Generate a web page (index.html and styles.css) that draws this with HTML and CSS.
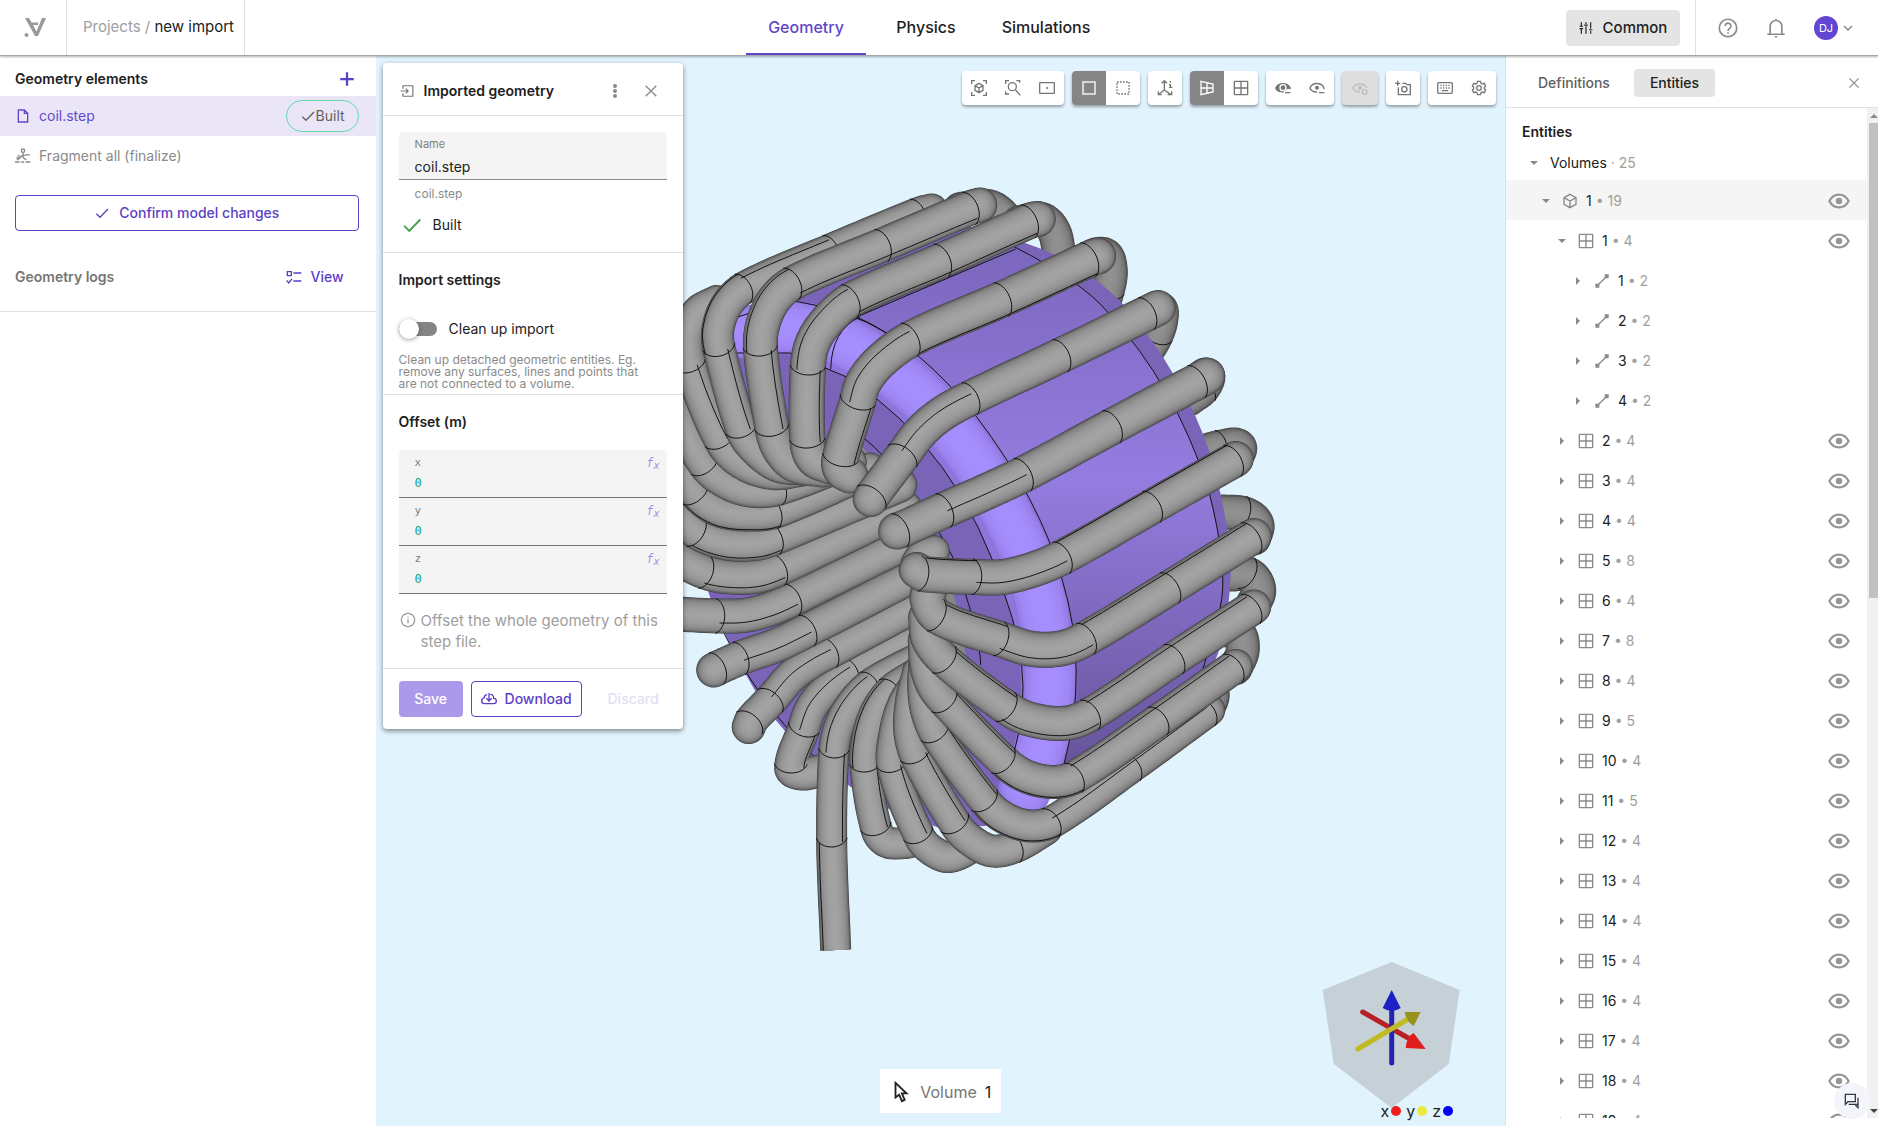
FILE: index.html
```
<!DOCTYPE html>
<html lang="en">
<head>
    <meta charset="UTF-8">
    <meta name="viewport" content="width=device-width, initial-scale=1.0">
    <title>new import</title>
    <link rel="stylesheet" href="styles.css">
</head>
<body>
    <svg class="sprite" aria-hidden="true">
        <symbol id="i-plus" viewBox="0 0 24 24"><path d="M12 3v18M3 12h18"/></symbol>
        <symbol id="i-file" viewBox="0 0 24 24"><path d="M5 3h9l5 5v13H5zM14 3v5h5"/></symbol>
        <symbol id="i-check" viewBox="0 0 24 24"><path d="M3.500 13l5.500 5.500L21 6"/></symbol>
        <symbol id="i-x" viewBox="0 0 24 24"><path d="M4 4l16 16M20 4L4 20"/></symbol>
        <symbol id="i-down" viewBox="0 0 24 24"><path d="M4 8l8 8 8-8"/></symbol>
        <symbol id="i-fragment" viewBox="0 0 24 24"><path d="M0 21h7M9 21h5M16 21h7M2 15h5l4-4M3 18l5-3M12 7v7l5 4M13 11l9-1M4 12h3"/><circle cx="12" cy="4" r="2.500"/></symbol>
        <symbol id="i-list" viewBox="0 0 24 24"><path d="M2 4h6v6H2zM11 6h12M11 18h12M1 17l3 4 5-6"/></symbol>
        <symbol id="i-sliders" viewBox="0 0 24 24"><path d="M4 2v7M4 13v9M1 13h6M12 2v3M12 9v13M9 7h6M20 2v11M20 17v5M17 15h6M1 9h6"/></symbol>
        <symbol id="i-help" viewBox="0 0 24 24"><circle cx="12" cy="12" r="10.500"/><path d="M8.500 9.500a3.500 3.500 0 1 1 5.500 3c-1.500 1-2 1.500-2 3M12 17v2"/></symbol>
        <symbol id="i-bell" viewBox="0 0 24 24"><path d="M12 1v2M5 19v-9a7 7 0 0 1 14 0v9M1.500 19.500h21M10.500 22.500h3"/></symbol>
        <symbol id="i-import" viewBox="0 0 24 24"><path d="M5 8V3h17v18H5v-5M1 12h13M10 8l4 4-4 4"/></symbol>
        <symbol id="i-info" viewBox="0 0 24 24"><circle cx="12" cy="12" r="10"/><path d="M12 11v6M12 7v2"/></symbol>
        <symbol id="i-cloud" viewBox="0 0 24 24"><path d="M9 5c-3 1-4 3-4 5-3 1-4 3-4 5 0 3 2 4 4 4h14c3 0 4-2 4-4s-1-4-4-4c0-4-2-6-5-6M12 3v11M8 11l4 4 4-4"/></symbol>
        <symbol id="i-cube" viewBox="0 0 24 24"><path d="M12 2l9 5v10l-9 5-9-5V7zM3 7l9 5 9-5M12 12v10"/></symbol>
        <symbol id="i-grid" viewBox="0 0 24 24"><rect x="2" y="2" width="20" height="20" rx="1"/><path d="M12 2v20M2 12h20"/></symbol>
        <symbol id="i-edge" viewBox="0 0 24 24"><path class="solid" d="M2 16h6v6H2zM16 2h6v6h-6z"/><path d="M7 17L17 7"/></symbol>
        <symbol id="i-eye" viewBox="0 0 24 24"><path d="M1.500 12c2.500-5 6-7 10.500-7s8 2 10.500 7c-2.500 5-6 7-10.500 7s-8-2-10.500-7z"/><circle class="solid" cx="12" cy="12" r="3.500"/></symbol>
        <symbol id="i-eye-half" viewBox="0 0 24 24"><path d="M12 18C7 18 3 16 1.500 12 5 3 19 3 22.500 12v2M15 19h8"/><circle class="solid" cx="12" cy="11.500" r="3"/></symbol>
        <symbol id="i-eye-fill" viewBox="0 0 24 24"><path class="solid" fill-rule="evenodd" d="M0 12C4 2 20 2 24 12l-1 2c-3-1-6 0-8 2l-3 3C7 19 2 17 0 12zM12 6a5.500 5.500 0 1 0 0 11 5.500 5.500 0 0 0 0-11z"/><circle class="solid" cx="12" cy="11.500" r="3.500"/><path d="M15 19h8"/></symbol>
        <symbol id="i-eye-reset" viewBox="0 0 24 24"><path d="M12 18C7 18 3 16 1.500 12 5 4 18 4 22.500 12"/><circle class="solid" cx="12" cy="11.500" r="3"/><circle cx="19" cy="18" r="3.500"/></symbol>
        <symbol id="i-fit" viewBox="0 0 24 24"><path d="M1 6V1h5M18 1h5v5M23 18v5h-5M6 23H1v-5M12 5l6 3.500v7L12 19l-6-3.500v-7zM6 8.500l6 3.500 6-3.500M12 12v7"/></symbol>
        <symbol id="i-zoom" viewBox="0 0 24 24"><path d="M1 6V1h5M17 1h5v3M6 21H1v-4M16 15l7 8"/><circle cx="11" cy="10" r="6"/></symbol>
        <symbol id="i-center" viewBox="0 0 24 24"><rect x="1" y="4" width="22" height="16" rx="1"/><circle class="solid" cx="12" cy="12" r="1.500"/></symbol>
        <symbol id="i-square" viewBox="0 0 24 24"><rect x="3" y="3" width="18" height="18"/></symbol>
        <symbol id="i-dashed" viewBox="0 0 24 24"><rect x="3" y="3" width="18" height="18" stroke-dasharray="2.500 2"/></symbol>
        <symbol id="i-axes" viewBox="0 0 24 24"><path d="M11 15V2M7 5l4-4 4 4M11 15L2 22M11 15l10 7M2 17v5h5M16 22h6v-5M20 2v2M18 7h2v4M18 11h5"/></symbol>
        <symbol id="i-persp" viewBox="0 0 24 24"><path d="M3 2l18 4v12L3 22zM12 4v16M3 12h18"/></symbol>
        <symbol id="i-camera" viewBox="0 0 24 24"><path d="M5 11v11h18V7h-5l-2-2h-5M4 1v8M0 5h8"/><circle cx="14" cy="14" r="4"/></symbol>
        <symbol id="i-keyboard" viewBox="0 0 24 24"><rect x="1" y="4" width="22" height="16" rx="2"/><path d="M5 8h14M5 12h14" stroke-dasharray="2 2"/><path d="M7 16h10"/></symbol>
        <symbol id="i-gear" viewBox="0 0 24 24"><path d="M10 2h4l1 3 2 1 3-1 2 4-2 2v2l2 2-2 4-3-1-2 1-1 3h-4l-1-3-2-1-3 1-2-4 2-2v-2L2 9l2-4 3 1 2-1z"/><circle cx="12" cy="12" r="3.500"/></symbol>
        <symbol id="i-cursor" viewBox="0 0 24 24"><path d="M6 2v16l4-3 3 7 3-1.500-3-7h5z"/></symbol>
        <symbol id="i-chat" viewBox="0 0 24 24"><path d="M2 2h15v11H6l-4 4zM21 7v10H7M21 12v10l-4-4"/></symbol>
    </svg>

    <header class="topbar">
        <div class="topbar-side">
            <a class="logo" href="#" aria-label="Home">
                <svg width="22" height="20" viewBox="0 0 22 20"><path class="logo-mark" fill-rule="evenodd" d="M1 0h4l2.500 4.500H14V7H9l3.500 6.500L18 0h4l-8 18h-3z"/><circle class="logo-mark" cx="2.500" cy="17" r="2"/></svg>
            </a>
            <nav class="crumbs"><a href="#">Projects</a> / <span>new import</span></nav>
        </div>
        <nav class="main-tabs">
            <a class="active" href="#">Geometry</a>
            <a href="#">Physics</a>
            <a href="#">Simulations</a>
        </nav>
        <div class="topbar-side right">
            <button class="common" type="button"><svg class="icon s14"><use href="#i-sliders"/></svg>Common</button>
            <div class="account">
                <button type="button" aria-label="Help"><svg class="icon s20"><use href="#i-help"/></svg></button>
                <button type="button" aria-label="Notifications"><svg class="icon s20"><use href="#i-bell"/></svg></button>
                <button class="user" type="button"><span class="avatar">DJ</span><svg class="icon s12"><use href="#i-down"/></svg></button>
            </div>
        </div>
    </header>

    <main class="workspace">
        <aside class="elements">
            <div class="elements-head">
                <h2>Geometry elements</h2>
                <button class="plain" type="button" aria-label="Add"><svg class="icon s18 bold"><use href="#i-plus"/></svg></button>
            </div>
            <a class="element selected" href="#"><svg class="icon s16"><use href="#i-file"/></svg>coil.step<span class="pill"><svg class="icon s16"><use href="#i-check"/></svg>Built</span></a>
            <a class="element" href="#"><svg class="icon s16"><use href="#i-fragment"/></svg>Fragment all (finalize)</a>
            <button class="outline confirm" type="button"><svg class="icon s16"><use href="#i-check"/></svg>Confirm model changes</button>
            <div class="logs">
                <h2>Geometry logs</h2>
                <button class="plain" type="button"><svg class="icon s16"><use href="#i-list"/></svg>View</button>
            </div>
        </aside>

        <section class="stage">
            <svg class="scene" viewBox="376 56 1130 1070" preserveAspectRatio="xMidYMid slice">
                <defs>
                    <linearGradient id="outerFace" x1="0" y1="0" x2="0" y2="1">
                        <stop offset="0" stop-color="#7b66bd"/>
                        <stop offset="0.45" stop-color="#957ce0"/>
                        <stop offset="1" stop-color="#66549a"/>
                    </linearGradient>
                </defs>
                <g id="back"></g>
                <path class="core" d="M735 312L960 224L1020 241Q1084 262 1124 305Q1184 375 1211 455Q1232 530 1231 575Q1228 640 1210 672L1150 715L1065 770L1030 808L985 826L940 828L895 812Q800 765 755 690Q695 590 690 500L690 360Z"/>
                <path class="hole" d="M790 430L863 448Q910 490 930 530Q965 600 970 700L930 720L850 700Q760 600 720 520L715 450Z"/>
                <path class="outer-face" d="M857 317L1016 245Q1080 280 1108 312Q1175 385 1208 487Q1230 570 1220 610Q1213 660 1200 680L1064 765L1078 697Q1080 640 1062 578Q1040 500 977 417Q920 345 857 317Z"/>
                <path class="bevel-base" d="M857 317Q920 345 977 417Q1040 500 1062 578Q1090 670 1064 765L1040 803L1000 820Q1040 690 1005 595Q960 450 847 377L790 353H735V318L790 300Z"/>
                <g id="bevel"></g>
                <path class="seam" d="M735 318L790 300Q850 310 887 333M857 317L1016 249M1015 247Q1080 280 1108 312Q1175 385 1208 487Q1230 570 1220 610L1203 670M857 317Q920 345 977 417Q1040 500 1062 578Q1090 670 1064 765M735 353L790 353L847 377Q960 450 1005 595Q1040 690 1008 770M863 437Q910 475 953 557Q980 630 981 665M720 625Q760 705 815 757M831 369Q832 330 860 317"/>
                <g id="front"></g>
                <g class="gizmo">
                    <path class="shield" d="M1392 962L1460 990L1449 1064L1392 1108L1334 1064L1323 990Z"/>
                    <path class="axis x" d="M1363 1012L1412 1040"/>
                    <path class="axis z" d="M1392 1006V1063"/>
                    <path class="axis y" d="M1358 1049L1410 1018"/>
                    <path class="head z" d="M1392 990L1401 1008Q1392 1014 1383 1008Z"/>
                    <path class="head x" d="M1426 1049L1414 1033Q1407 1036 1406 1048Z"/>
                    <path class="head y" d="M1421 1012L1405 1012Q1407 1022 1414 1026Z"/>
                </g>
            </svg>

            <form class="panel">
                <header class="panel-head">
                    <svg class="icon s14"><use href="#i-import"/></svg>
                    <h3>Imported geometry</h3>
                    <button class="plain" type="button" aria-label="More"><svg class="dots" width="16" height="16" viewBox="0 0 16 16"><circle cx="8" cy="3" r="2"/><circle cx="8" cy="8" r="2"/><circle cx="8" cy="13" r="2"/></svg></button>
                    <button class="plain" type="button" aria-label="Close"><svg class="icon s16"><use href="#i-x"/></svg></button>
                </header>
                <div class="panel-part general">
                    <div class="field">
                        <label for="name">Name</label>
                        <input id="name" type="text" value="coil.step">
                    </div>
                    <p class="hint">coil.step</p>
                    <p class="built"><svg class="icon s22"><use href="#i-check"/></svg>Built</p>
                </div>
                <div class="panel-part import">
                    <h3>Import settings</h3>
                    <label class="switch"><input type="checkbox"><span class="track"></span>Clean up import</label>
                    <p class="small">Clean up detached geometric entities. Eg. remove any surfaces, lines and points that are not connected to a volume.</p>
                </div>
                <div class="panel-part offset">
                    <h3>Offset (m)</h3>
                    <div class="field mono"><label for="ox">x</label><input id="ox" type="text" value="0"><em>f<sub>x</sub></em></div>
                    <div class="field mono"><label for="oy">y</label><input id="oy" type="text" value="0"><em>f<sub>x</sub></em></div>
                    <div class="field mono"><label for="oz">z</label><input id="oz" type="text" value="0"><em>f<sub>x</sub></em></div>
                    <p class="info"><svg class="icon s16"><use href="#i-info"/></svg><span>Offset the whole geometry of this step file.</span></p>
                </div>
                <footer class="panel-foot">
                    <button class="save" type="submit">Save</button>
                    <button class="outline" type="button"><svg class="icon s16"><use href="#i-cloud"/></svg>Download</button>
                    <button class="discard" type="button">Discard</button>
                </footer>
            </form>

            <div class="toolbar">
                <div class="tools">
                    <button type="button" aria-label="Fit"><svg class="icon s16"><use href="#i-fit"/></svg></button>
                    <button type="button" aria-label="Zoom to area"><svg class="icon s16"><use href="#i-zoom"/></svg></button>
                    <button type="button" aria-label="Center"><svg class="icon s16"><use href="#i-center"/></svg></button>
                </div>
                <div class="tools">
                    <button class="on" type="button" aria-label="Solid"><svg class="icon s16"><use href="#i-square"/></svg></button>
                    <button type="button" aria-label="Transparent"><svg class="icon s16"><use href="#i-dashed"/></svg></button>
                </div>
                <div class="tools">
                    <button type="button" aria-label="Axes"><svg class="icon s16"><use href="#i-axes"/></svg></button>
                </div>
                <div class="tools">
                    <button class="on" type="button" aria-label="Perspective"><svg class="icon s16"><use href="#i-persp"/></svg></button>
                    <button type="button" aria-label="Orthographic"><svg class="icon s16"><use href="#i-grid"/></svg></button>
                </div>
                <div class="tools">
                    <button type="button" aria-label="Hide selected"><svg class="icon s16"><use href="#i-eye-fill"/></svg></button>
                    <button type="button" aria-label="Hide others"><svg class="icon s16"><use href="#i-eye-half"/></svg></button>
                </div>
                <div class="tools off">
                    <button type="button" disabled aria-label="Reset visibility"><svg class="icon s16"><use href="#i-eye-reset"/></svg></button>
                </div>
                <div class="tools">
                    <button type="button" aria-label="Screenshot"><svg class="icon s16"><use href="#i-camera"/></svg></button>
                </div>
                <div class="tools">
                    <button type="button" aria-label="Shortcuts"><svg class="icon s16"><use href="#i-keyboard"/></svg></button>
                    <button type="button" aria-label="Settings"><svg class="icon s16"><use href="#i-gear"/></svg></button>
                </div>
            </div>

            <div class="picked"><svg class="icon s22"><use href="#i-cursor"/></svg>Volume <b>1</b></div>
            <div class="legend">x<i class="x"></i>y<i class="y"></i>z<i class="z"></i></div>
        </section>

        <aside class="entities">
            <div class="entity-tabs">
                <button type="button">Definitions</button>
                <button class="active" type="button">Entities</button>
                <button class="plain" type="button" aria-label="Close"><svg class="icon s14"><use href="#i-x"/></svg></button>
            </div>
            <div class="entity-body">
                <div class="entity-list">
                    <h2>Entities</h2>
                    <div id="tree"></div>
                </div>
                <div class="scrollbar"><span class="arrow up"></span><span class="thumb"></span><span class="arrow down"></span></div>
            </div>
            <button class="chat" type="button" aria-label="Chat"><svg class="icon s16"><use href="#i-chat"/></svg></button>
        </aside>
    </main>
    <script src="script.js"></script>
</body>
</html>
```
FILE: styles.css
```
*{
    box-sizing: border-box;
    margin: 0;
    padding: 0;
}
body{
    display: flex;
    flex-direction: column;
    height: 100vh;
    overflow: hidden;
    font-family: Inter, "Liberation Sans", sans-serif;
    font-size: 14px;
    line-height: 20px;
    color: #212121;
    background: #fff;
}
button, input{
    font: inherit;
    color: inherit;
    border: 0;
    background: none;
}
button{
    display: flex;
    align-items: center;
    justify-content: center;
}
a{
    color: inherit;
    text-decoration: none;
}
h2, h3{
    font-size: 14px;
    font-weight: 600;
}
.sprite{
    position: absolute;
    width: 0;
    height: 0;
}
.icon{
    flex: none;
    fill: none;
    stroke: currentColor;
    stroke-width: 2;
}
.icon.bold{
    stroke-width: 3;
}
.solid{
    fill: currentColor;
    stroke: none;
}
.s12{ width: 12px; height: 12px; }
.s14{ width: 14px; height: 14px; }
.s16{ width: 16px; height: 16px; }
.s18{ width: 18px; height: 18px; }
.s20{ width: 20px; height: 20px; }
.s22{ width: 22px; height: 22px; }

/* top bar */
.topbar{
    display: flex;
    height: 56px;
    flex: none;
    z-index: 2;
    border-bottom: 1px solid #a6a6a6;
    box-shadow: 0 1px 2px rgba(0,0,0,.3);
    background: #fff;
}
.topbar-side{
    display: flex;
    flex: 1;
    align-items: stretch;
}
.topbar-side.right{
    justify-content: flex-end;
    align-items: center;
}
.logo{
    display: flex;
    align-items: center;
    justify-content: center;
    width: 67px;
    padding-left: 4px;
    border-right: 1px solid #e0e0e0;
}
.logo-mark{
    fill: #9a9a9a;
}
.crumbs{
    width: 178px;
    padding-left: 16px;
    line-height: 54px;
    font-size: 15px;
    color: #9e9e9e;
    border-right: 1px solid #e0e0e0;
}
.crumbs span{
    color: #212121;
}
.main-tabs{
    display: flex;
    margin-right: 26px;
}
.main-tabs a{
    width: 120px;
    text-align: center;
    font-size: 16px;
    font-weight: 500;
    line-height: 54px;
}
.main-tabs .active{
    color: #5f45c8;
    border-bottom: 2px solid #5f45c8;
}
.common{
    gap: 10px;
    width: 114px;
    height: 36px;
    margin-right: 15px;
    font-size: 15px;
    font-weight: 500;
    background: #e4e4e4;
    border-radius: 4px;
}
.account{
    display: flex;
    align-items: center;
    align-self: stretch;
    gap: 28px;
    padding: 0 24px 0 22px;
    color: #8a8a8a;
    border-left: 1px solid #e0e0e0;
}
.user{
    gap: 4px;
}
.user .icon{
    stroke-width: 3;
}
.avatar{
    width: 24px;
    height: 24px;
    border-radius: 50%;
    background: #6246d2;
    color: #fff;
    font-size: 11px;
    line-height: 24px;
}

.workspace{
    display: flex;
    flex: 1;
    min-height: 0;
}

/* left column */
.elements{
    width: 20%;
    background: #fff;
}
.plain{
    color: #5b3fc4;
    font-weight: 500;
}
.elements-head{
    display: flex;
    justify-content: space-between;
    align-items: center;
    height: 40px;
    padding: 6px 20px 0 15px;
}
.element{
    display: flex;
    align-items: center;
    gap: 8px;
    height: 40px;
    padding: 0 17px 0 15px;
    color: #8a8a8a;
}
.element.selected{
    color: #6246d2;
    background: #eae6f7;
}
.pill{
    display: flex;
    align-items: center;
    justify-content: center;
    width: 73px;
    height: 32px;
    margin-left: auto;
    color: #616161;
    border: 1px solid #5fdcae;
    border-radius: 16px;
}
.outline{
    gap: 8px;
    height: 36px;
    color: #5b3fc4;
    font-weight: 500;
    border: 1px solid #5b3fc4;
    border-radius: 4px;
}
.confirm{
    gap: 9px;
    width: calc(100% - 32px);
    margin: 19px 17px 0 15px;
}
.logs{
    display: flex;
    justify-content: space-between;
    align-items: center;
    height: 81px;
    padding: 12px 32px 0 15px;
    color: #757575;
    border-bottom: 1px solid #e0e0e0;
}
.logs .plain{
    gap: 9px;
}

/* 3d view */
.stage{
    position: relative;
    flex: 1;
    min-width: 0;
    background: #e1f3fd;
}
.scene{
    display: block;
    width: 100%;
    height: 100%;
}
.core{ fill: #7a64b8; }
.hole{ fill: #858585; }
.outer-face{ fill: url(#outerFace); }
.bevel-base{ fill: #8d75dc; }
.seam{
    fill: none;
    stroke: #111;
    stroke-width: 1;
}
.tube{
    fill: none;
    stroke-linecap: round;
    stroke-linejoin: round;
}
.tube.cut{
    stroke-linecap: butt;
}
.shield{ fill: #c5d0d7; }
.axis{
    stroke-width: 5;
    stroke-linecap: round;
}
.axis.x{ stroke: #b82026; }
.axis.y{ stroke: #c0bb24; }
.axis.z{ stroke: #2424b0; }
.head.x{ fill: #e01c1c; }
.head.y{ fill: #98921c; }
.head.z{ fill: #1f1fc8; }

/* dialog over the view */
.panel{
    position: absolute;
    top: 7px;
    left: 7px;
    width: 300px;
    background: #fff;
    border-radius: 4px;
    box-shadow: 0 2px 5px rgba(0,0,0,.45);
}
.panel-head{
    display: flex;
    align-items: center;
    gap: 10px;
    height: 52px;
    padding: 4px 24px 0 17px;
    color: #757575;
}
.panel-head h3{
    flex: 1;
    color: #212121;
}
.panel-head .plain{
    margin-left: 10px;
    color: #8a8a8a;
}
.dots{
    fill: #8a8a8a;
}
.panel-part{
    padding: 16px;
    border-top: 1px solid #e0e0e0;
}
.general{
    height: 137px;
}
.field{
    position: relative;
    height: 48px;
    padding: 4px 16px 0;
    background: #f4f4f4;
    border-bottom: 1px solid #8a8a8a;
    border-radius: 4px 4px 0 0;
}
.field label{
    display: block;
    font-size: 11px;
    line-height: 16px;
    color: #7d7d7d;
}
.field input{
    display: block;
    width: 100%;
    height: 28px;
}
.hint{
    padding: 4px 16px;
    font-size: 12px;
    color: #8a8a8a;
}
.built{
    display: flex;
    align-items: center;
    gap: 10px;
    padding: 1px 0 0 2px;
    line-height: 32px;
}
.built .icon{
    color: #43a047;
}
.import{
    height: 142px;
    padding-top: 17px;
}
.switch{
    display: flex;
    align-items: center;
    height: 20px;
    margin-top: 29px;
}
.switch input{
    position: absolute;
    opacity: 0;
}
.track{
    width: 38px;
    height: 14px;
    margin-right: 12px;
    border-radius: 7px;
    background: #858585;
}
.track::before{
    content: "";
    display: block;
    width: 20px;
    height: 20px;
    margin-top: -3px;
    border-radius: 50%;
    background: #fff;
    box-shadow: 0 1px 4px rgba(0,0,0,.4);
}
.small{
    margin: 15px 10px 0 0;
    font-size: 12px;
    line-height: 12px;
    color: #8a8a8a;
}
.offset{
    height: 274px;
    padding-top: 17px;
}
.offset h3{
    margin-bottom: 18px;
}
.mono{
    padding-top: 5px;
    font-family: "DejaVu Sans Mono", monospace;
    border-color: #757575;
}
.mono input{
    height: 20px;
    margin-top: 2px;
    font-size: 12px;
    color: #0f9d92;
}
.mono em{
    position: absolute;
    top: 3px;
    right: 7px;
    font-size: 12px;
    color: #a793e6;
}
.mono sub{
    font-size: 10px;
    vertical-align: -2px;
}
.info{
    display: flex;
    gap: 5px;
    margin-top: 16px;
    font-size: 15px;
    line-height: 21px;
    color: #9e9e9e;
}
.info .icon{
    margin: 2px 0 0 1px;
}
.panel-foot{
    display: flex;
    gap: 8px;
    padding: 12px 16px;
    border-top: 1px solid #e0e0e0;
}
.panel-foot button{
    height: 36px;
    font-weight: 500;
    border-radius: 4px;
}
.save{
    width: 64px;
    color: #fff;
    background: #ab99ea;
}
.panel-foot .outline{
    width: 111px;
}
.discard{
    flex: 1;
    padding-left: 10px;
    color: #e3def3;
}

.toolbar{
    position: absolute;
    top: 15px;
    right: 9px;
    display: flex;
    gap: 8px;
}
.tools{
    display: flex;
    overflow: hidden;
    color: #757575;
    background: #fff;
    border-radius: 4px;
    box-shadow: 0 2px 3px rgba(0,0,0,.35);
}
.tools button{
    width: 34px;
    height: 34px;
}
.tools .on{
    color: #fff;
    background: #858585;
}
.tools.off{
    color: #bdbdbd;
    background: #dedede;
}
.tools.off button{
    width: 36px;
}
.picked{
    position: absolute;
    bottom: 13px;
    left: 50%;
    display: flex;
    align-items: center;
    gap: 8px;
    width: 121px;
    height: 44px;
    margin-left: -60px;
    padding: 2px 0 0 10px;
    font-size: 16px;
    color: #757575;
    background: #fff;
}
.picked .icon, .picked b{
    color: #212121;
    font-weight: 400;
}
.legend{
    position: absolute;
    right: 52px;
    bottom: 5px;
    display: flex;
    align-items: center;
    gap: 2px;
    font-size: 16px;
}
.legend i{
    width: 10px;
    height: 10px;
    margin-right: 3px;
    border-radius: 50%;
}
.legend .x{ background: #ee1c1c; }
.legend .y{ background: #ece93c; }
.legend .z{ margin-right: 0; background: #0000f5; }

/* right column */
.entities{
    position: relative;
    display: flex;
    flex-direction: column;
    width: 373px;
    padding-bottom: 8px;
    background: #fff;
    border-left: 1px solid #e0e0e0;
}
.entity-tabs{
    display: flex;
    flex: none;
    align-items: center;
    height: 52px;
    padding: 2px 17px 0 16px;
    border-bottom: 1px solid #e0e0e0;
}
.entity-tabs button{
    height: 28px;
    padding: 0 16px;
    font-weight: 500;
    color: #616161;
    border-radius: 4px;
}
.entity-tabs .active{
    margin-left: 8px;
    color: #212121;
    background: #e4e4e4;
}
.entity-tabs .plain{
    margin-left: auto;
    padding: 0;
    color: #8a8a8a;
}
.entity-body{
    display: flex;
    flex: 1;
    min-height: 0;
    overflow: hidden;
}
.entity-list{
    flex: 1;
    padding-top: 14px;
}
.entity-list h2{
    padding-left: 16px;
}
.node{
    display: flex;
    align-items: center;
    height: 40px;
    padding: 1px 17px 0 0;
}
.node.root{
    height: 38px;
    padding: 4px 0 0 20px;
}
.node.volume{
    padding-left: 32px;
    background: #f5f5f5;
}
.node.surface{ padding-left: 48px; }
.node.curve{ padding-left: 64px; }
.node .icon{
    color: #8a8a8a;
}
.node .kind{
    margin: 0 8px 0 8px;
}
.node .count{
    color: #9e9e9e;
    white-space: pre;
}
.node .toggle{
    width: 16px;
    height: 16px;
}
.node .toggle::before{
    content: "";
    border: 4px solid transparent;
    border-left-color: #8a8a8a;
    border-right-width: 0;
}
.node .toggle.open::before{
    border-width: 4px 4px 0;
    border-color: #8a8a8a transparent transparent;
}
.root .toggle{
    margin-right: 8px;
}
.node .eye{
    margin-left: auto;
}
.node .eye .icon{
    color: #969696;
    stroke-width: 2.4;
}
.scrollbar{
    display: flex;
    flex-direction: column;
    align-items: center;
    width: 11px;
    background: #f1f1f1;
}
.thumb{
    width: 9px;
    height: 47%;
    margin-left: 2px;
    background: #c1c1c1;
}
.arrow{
    margin: 6px 0 5px 2px;
    border: 4px solid transparent;
    border-top-width: 0;
    border-bottom-color: #8a8a8a;
}
.arrow.down{
    margin-top: auto;
    border-width: 4px 4px 0;
    border-color: #424242 transparent transparent;
}
.chat{
    position: absolute;
    right: 8px;
    bottom: 7px;
    width: 36px;
    height: 36px;
    color: #37394a;
    background: #f3f5fa;
    border-radius: 50%;
}
```
FILE: script.js
```
const NS = "http://www.w3.org/2000/svg";

// Turns of the coil. p: centre line, w: thickness, s: points that carry a
// ring seam, l: seams along the tube [from, to, side].
const tails = [
	{ w: 32, p: [[960,208],[988,205],[1004,215],[1010,232]] },
	{ w: 34, p: [[1020,222],[1042,219],[1055,233],[1060,262]] },
	{ w: 34, p: [[1080,262],[1104,254],[1111,270],[1107,294],[1100,312]], s: [3] },
	{ w: 33, p: [[1140,316],[1160,308],[1162,320],[1156,338],[1145,356]], s: [3] },
	{ w: 32, p: [[1195,382],[1208,374],[1205,388],[1190,400]], s: [2] },
	{ w: 33, p: [[1200,452],[1222,446],[1240,446],[1236,460]], s: [1] },
	{ w: 35, p: [[1222,512],[1245,514],[1257,524],[1254,538]], s: [1] },
	{ w: 35, p: [[1230,574],[1250,575],[1259,590],[1252,607]], s: [1] },
	{ w: 34, p: [[1225,630],[1239,633],[1243,650],[1236,668]] },
	{ w: 32, p: [[1208,675],[1214,695],[1208,711]] }
];

const turns = [
	{ w: 33, p: [[820,771],[802,774],[791,768],[803,731],[812,707],[829,687],[852,670],[922,633]], s: [2,3,6], l: [[3,6,-.2],[2,3,.8]] },
	{ w: 34, p: [[749,727],[752,720],[773,698],[792,676],[813,661],[832,651],[922,603]], s: [1,2,5], l: [[2,5,-.1]] },
	{ w: 35, p: [[714,670],[720,667],[743,657],[777,645],[810,629],[915,575]], s: [1,2,4], l: [[2,4,.2]] },
	{ w: 35, p: [[650,611],[680,614],[720,616],[747,615],[773,608],[795,598],[912,540]], s: [2,5], l: [[2,5,.4]] },
	{ w: 35, p: [[650,544],[680,560],[708,573],[732,577],[758,576],[781,568],[905,508]], s: [2,5], l: [[2,5,.6]] },
	{ w: 35, p: [[650,490],[680,516],[699,533],[728,543],[758,543],[777,537],[900,485]], s: [2,5], l: [[2,5,.8]] },
	{ w: 35, p: [[655,425],[680,467],[698,495],[720,510],[750,514],[776,511],[870,470]], s: [2,5], l: [[2,5,.9]] },
	{ w: 34, p: [[668,380],[683,424],[707,467],[730,484],[755,491],[781,488],[850,462]], s: [2,5] },
	{ w: 34, p: [[717,302],[698,313],[687,337],[691,367],[722,442],[743,463],[773,473],[800,470]], s: [3,4], l: [[3,4,-.4]] },
	{ w: 33, p: [[932,210],[920,213],[833,249],[746,287],[727,305],[718,330],[720,351],[743,432],[757,451],[778,466],[803,469]], s: [1,2,3,6,7], l: [[2,3,.6],[3,6,.9],[6,7,-.5]] },
	{ w: 35, p: [[980,205],[973,207],[885,244],[795,282],[775,299],[763,325],[761,351],[773,431],[780,450],[795,465],[823,470]], s: [1,2,3,6,7], l: [[1,3,-.7],[3,6,.8],[6,7,-.6]] },
	{ w: 36, p: [[1038,219],[1032,220],[945,259],[853,299],[829,319],[813,343],[808,370],[808,443],[814,459],[829,466]], s: [1,2,3,6,7], l: [[1,3,-.8],[3,6,.6],[6,7,-.7]] },
	{ w: 37, p: [[1098,256],[1092,258],[1005,298],[913,338],[882,360],[864,382],[857,404],[840,461],[842,470],[850,475]], s: [1,2,3,6,7], l: [[1,3,-.9],[3,6,.4],[6,7,-.8]] },
	{ w: 36, p: [[1158,308],[1150,312],[1064,354],[973,397],[942,414],[920,433],[905,453],[874,494],[871,499]], s: [1,2,3,6,7], l: [[3,6,.2]] },
	{ w: 31, cut: true, p: [[920,657],[872,683],[852,703],[839,727],[834,753],[832,842],[836,950]], s: [1,4,5], l: [[1,4,.5],[4,5,-.7],[5,6,.8]] },
	{ w: 32, p: [[918,673],[893,689],[877,710],[868,737],[866,767],[877,830],[887,842],[905,843],[915,841]], s: [1,4,5], l: [[1,4,.8],[4,5,-.7]] },
	{ w: 32, p: [[919,680],[904,703],[895,733],[893,767],[920,837],[933,851],[950,857],[975,846]], s: [3,4], l: [[3,4,-.5]] },
	{ w: 33, p: [[919,672],[912,700],[910,730],[917,757],[957,826],[972,841],[993,851],[1017,846],[1046,829]], s: [3,4,7], l: [[3,4,-.6]] },
	{ w: 33, p: [[926,655],[924,685],[927,711],[937,735],[987,803],[1005,818],[1030,826],[1054,821],[1134,765],[1209,710]], s: [3,4,7,8,9], l: [[3,4,-.8],[4,7,.9],[7,9,-.2]] },
	{ w: 34, p: [[925,640],[927,667],[934,687],[947,703],[1006,763],[1028,777],[1055,782],[1077,776],[1161,719],[1236,666]], s: [3,4,7,8,9], l: [[3,4,-.8],[4,7,.9],[7,9,-.7]] },
	{ w: 35, p: [[926,617],[929,640],[947,662],[1009,709],[1033,720],[1067,723],[1093,713],[1177,657],[1254,607]], s: [2,3,6,7,8], l: [[2,3,-.8],[3,6,.7],[6,8,-.7]] },
	{ w: 36, p: [[932,583],[928,600],[939,617],[1003,640],[1033,649],[1063,648],[1089,637],[1173,586],[1254,536]], s: [2,3,6,7,8], l: [[2,3,-.8],[3,6,.5],[6,8,-.8]] },
	{ w: 32, p: [[917,563],[924,554],[934,551]] },
	{ w: 36, p: [[917,570],[924,574],[977,577],[1003,577],[1035,569],[1065,556],[1155,505],[1236,459]], s: [1,2,5,6,7], l: [[1,2,-.9],[2,5,.3],[5,7,-.9]] },
	{ w: 37, p: [[897,531],[903,529],[947,509],[988,491],[1026,473],[1115,425],[1200,380],[1207,376]], s: [1,2,4,5,6], l: [[2,4,.1]] }
];

const bevel = [
	{ w: 54, p: [[745,332],[800,328],[850,345],[893,373],[927,402],[968,450],[1005,510],[1032,570],[1046,630],[1050,680],[1043,740],[1025,790]] }
];

// Samples a smooth curve through the points, 12 steps for each span.
function sample(p){
	let out = [];
	let dir = p.map(function(_, i){
		let a = p[Math.max(i - 1, 0)], b = p[Math.min(i + 1, p.length - 1)];
		let d = Math.hypot(b[0] - a[0], b[1] - a[1]);
		return [(b[0] - a[0]) / d, (b[1] - a[1]) / d];
	});
	for(let i = 0; i < p.length - 1; i++){
		let a = p[i], b = p[i + 1];
		let h = Math.hypot(b[0] - a[0], b[1] - a[1]);
		for(let k = 0; k < 12; k++){
			let t = k / 12, t2 = t * t, t3 = t2 * t;
			out.push([0, 1].map(c => (2 * t3 - 3 * t2 + 1) * a[c] + (t3 - 2 * t2 + t) * h * dir[i][c] + (3 * t2 - 2 * t3) * b[c] + (t3 - t2) * h * dir[i + 1][c]));
		}
	}
	out.push(p[p.length - 1]);
	return out;
}

function normal(c, i){
	let a = c[Math.max(i - 1, 0)], b = c[Math.min(i + 1, c.length - 1)];
	let d = Math.hypot(b[0] - a[0], b[1] - a[1]);
	return [-(b[1] - a[1]) / d, (b[0] - a[0]) / d];
}

function line(pts){
	return "M" + pts.map(q => q[0].toFixed(1) + " " + q[1].toFixed(1)).join("L");
}

function addPath(group, d, cls, color, width){
	let el = document.createElementNS(NS, "path");
	el.setAttribute("d", d);
	el.setAttribute("class", cls);
	if(color){
		el.setAttribute("stroke", color);
		el.setAttribute("stroke-width", width);
	}
	group.appendChild(el);
}

function mix(a, b, t){
	return "rgb(" + a.map((v, i) => Math.round(v + (b[i] - v) * t)).join(",") + ")";
}

function drawTubes(id, list, dark, light, edge){
	let group = document.getElementById(id);
	list.forEach(function(tube){
		let c = sample(tube.p);
		let d = line(c);
		let cls = tube.cut ? "tube cut" : "tube";
		if(edge){
			addPath(group, d, cls, edge, tube.w);
		}
		for(let k = 0; k < 12; k++){
			let t = k / 12;
			addPath(group, d, cls, mix(dark, light, Math.sqrt(1 - (1 - t) * (1 - t))), (tube.w - 1) * (1 - t));
		}
		(tube.s || []).forEach(function(i){
			let q = c[i * 12], n = normal(c, i * 12), r = tube.w / 2;
			// rings always bulge to the right or downwards
			let bx = n[1], by = -n[0];
			if(bx * 2 + by < 0){
				bx = -bx;
				by = -by;
			}
			let ends = [-1, 1].map(s => (q[0] + n[0] * r * s - bx * 4).toFixed(1) + " " + (q[1] + n[1] * r * s - by * 4).toFixed(1));
			let mid = [-1, 1].map(s => (q[0] + n[0] * r * s * .7 + bx * 8).toFixed(1) + " " + (q[1] + n[1] * r * s * .7 + by * 8).toFixed(1));
			addPath(group, "M" + ends[0] + "C" + mid[0] + " " + mid[1] + " " + ends[1], "seam");
		});
		(tube.l || []).forEach(function(l){
			let pts = [];
			for(let i = l[0] * 12; i <= l[1] * 12; i++){
				let n = normal(c, i);
				pts.push([c[i][0] + n[0] * l[2] * tube.w / 2, c[i][1] + n[1] * l[2] * tube.w / 2]);
			}
			addPath(group, line(pts), "seam");
		});
	});
}

drawTubes("back", tails, [85, 85, 85], [145, 145, 145], "#4a4a4a");
drawTubes("bevel", bevel, [141, 117, 220], [166, 142, 255]);
drawTubes("front", turns, [98, 98, 98], [163, 163, 163], "#3c3c3c");

// Entity tree
const nodes = [["root", "Volumes", 25, true], ["volume", 1, 19, true], ["surface", 1, 4, true]];
for(let i = 1; i <= 4; i++){
	nodes.push(["curve", i, 2]);
}
[4, 4, 4, 8, 4, 8, 4, 5, 4, 5, 4, 4, 4, 4, 4, 4, 4, 4].forEach((n, i) => nodes.push(["surface", i + 2, n]));

const icons = { volume: "cube", surface: "grid", curve: "edge" };

document.getElementById("tree").innerHTML = nodes.map(function([type, name, count, open]){
	let html = `<div class="node ${type}"><button class="toggle${open ? " open" : ""}" type="button" aria-label="Toggle"></button>`;
	if(icons[type]){
		html += `<svg class="icon s16 kind"><use href="#i-${icons[type]}"/></svg>`;
	}
	html += `<span>${name}</span><span class="count"> ${type == "root" ? "·" : "•"} ${count}</span>`;
	if(type == "volume" || type == "surface"){
		html += `<button class="eye" type="button" aria-label="Hide"><svg class="icon s22"><use href="#i-eye"/></svg></button>`;
	}
	return html + "</div>";
}).join("");
```
